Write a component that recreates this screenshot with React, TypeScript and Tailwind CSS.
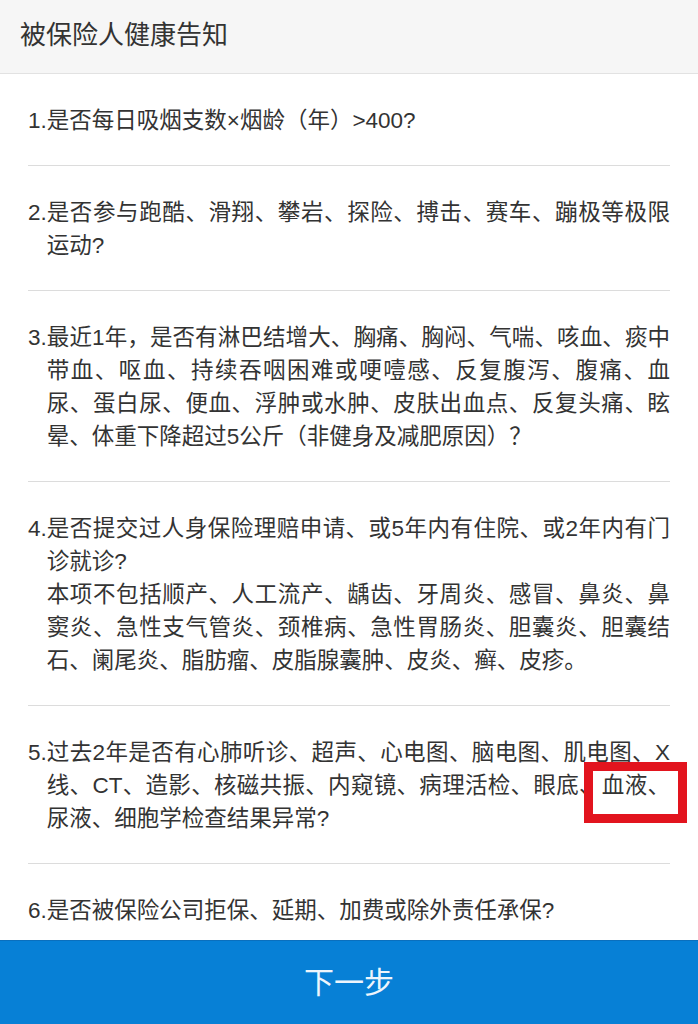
import React from "react";

type Item = { n: string; paras: string[] };

const items: Item[] = [
  { n: "1.", paras: ["是否每日吸烟支数×烟龄（年）>400?"] },
  { n: "2.", paras: ["是否参与跑酷、滑翔、攀岩、探险、搏击、赛车、蹦极等极限运动?"] },
  {
    n: "3.",
    paras: [
      "最近1年，是否有淋巴结增大、胸痛、胸闷、气喘、咳血、痰中带血、呕血、持续吞咽困难或哽噎感、反复腹泻、腹痛、血尿、蛋白尿、便血、浮肿或水肿、皮肤出血点、反复头痛、眩晕、体重下降超过5公斤（非健身及减肥原因）？",
    ],
  },
  {
    n: "4.",
    paras: [
      "是否提交过人身保险理赔申请、或5年内有住院、或2年内有门诊就诊?",
      "本项不包括顺产、人工流产、龋齿、牙周炎、感冒、鼻炎、鼻窦炎、急性支气管炎、颈椎病、急性胃肠炎、胆囊炎、胆囊结石、阑尾炎、脂肪瘤、皮脂腺囊肿、皮炎、癣、皮疹。",
    ],
  },
  {
    n: "5.",
    paras: [
      "过去2年是否有心肺听诊、超声、心电图、脑电图、肌电图、X线、CT、造影、核磁共振、内窥镜、病理活检、眼底、血液、尿液、细胞学检查结果异常?",
    ],
  },
  { n: "6.", paras: ["是否被保险公司拒保、延期、加费或除外责任承保?"] },
];

export default function App() {
  return (
    <div className="relative flex h-[1024px] w-full flex-col overflow-hidden bg-white font-['Liberation_Sans','Noto_Sans_CJK_SC',sans-serif] text-[#333333]">
      <header className="flex h-[74px] shrink-0 items-center border-b border-[#e2e2e2] bg-[#f6f6f6] pb-[3px] pl-[20px]">
        <h1 className="text-[26px] font-normal leading-none text-[#333333]">被保险人健康告知</h1>
      </header>

      <main className="flex-1 overflow-hidden">
        {items.map((it, i) => (
          <div
            key={it.n}
            className={
              i < items.length - 1
                ? "mx-[28px] flex border-b border-[#dcdcdc] pb-[28px] pt-[30px] text-[22.5px] leading-[33px]"
                : "mx-[28px] flex pb-[28px] pt-[30px] text-[22.5px] leading-[33px]"
            }
          >
            <span className="shrink-0">{it.n}</span>
            <div className="flex-1 text-justify">
              {it.paras.map((p, j) => (
                <p key={j}>{p}</p>
              ))}
            </div>
          </div>
        ))}
      </main>

      <button className="flex h-[84px] w-full shrink-0 items-center justify-center border-t border-[#0a6fbd] bg-[#0780d6] text-[30px] font-normal leading-none text-[#eef5fc]">
        下一步
      </button>

      <div className="pointer-events-none absolute left-[584px] top-[762px] h-[61px] w-[103px] border-[9px] border-[#e2141e]" />
    </div>
  );
}
